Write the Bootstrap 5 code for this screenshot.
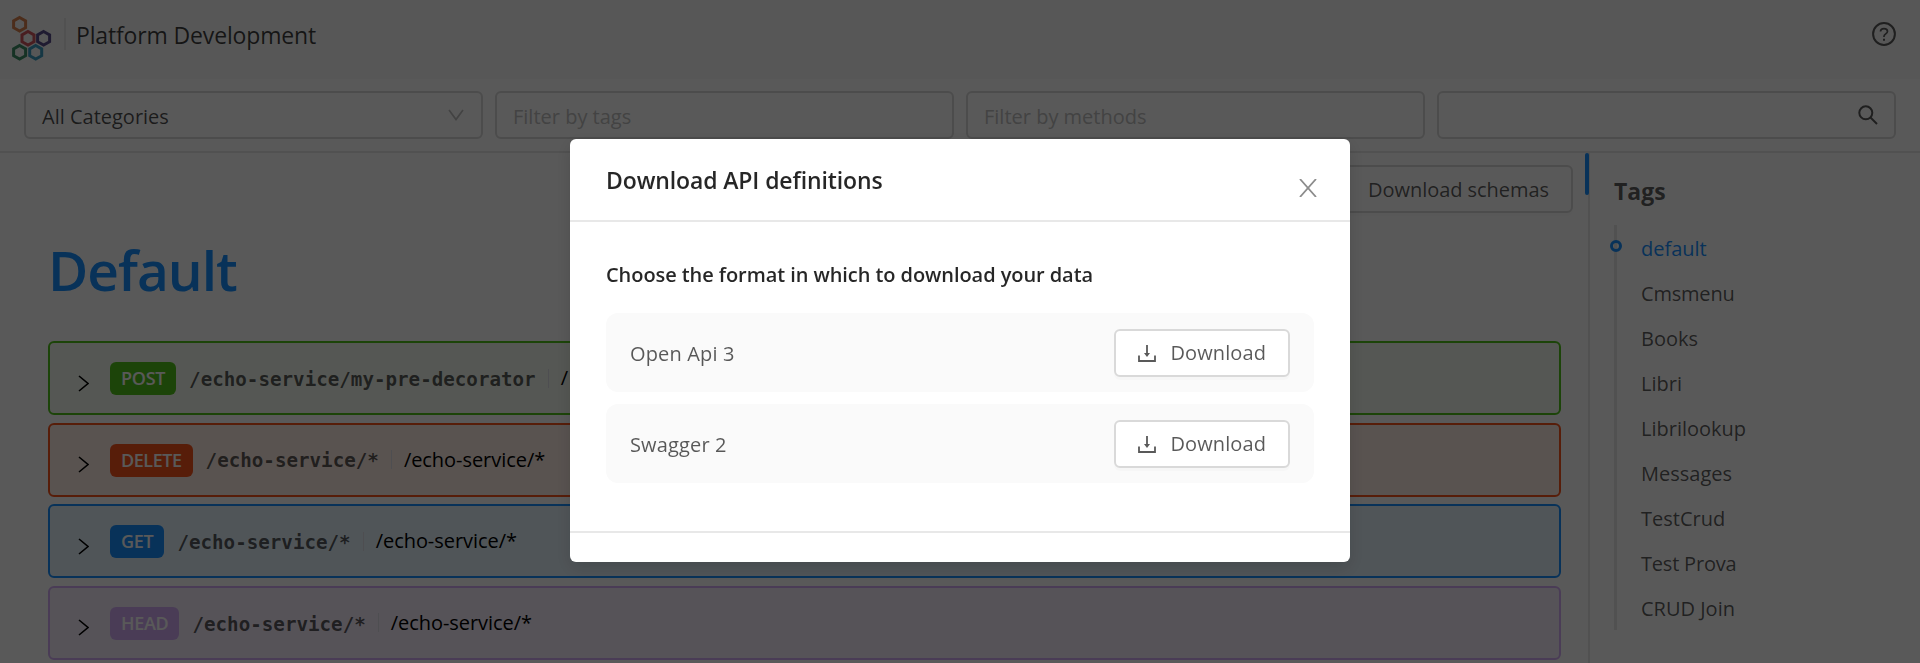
<!DOCTYPE html>
<html lang="en">
<head>
<meta charset="utf-8">
<meta name="viewport" content="width=device-width, initial-scale=1">
<title>Platform Development</title>
<link href="https://cdn.jsdelivr.net/npm/bootstrap@5.3.0/dist/css/bootstrap.min.css" rel="stylesheet">
<style>
  body { font-family: "Open Sans", "Noto Sans", sans-serif; font-size: 20px; line-height: 31.5px; color: rgba(0,0,0,.65); height: 663px; overflow: hidden; }
  svg { display: block; flex: none; }
  .page { height: 663px; }
  .topbar { height: 79px; background: #fafafa; padding: 0 24px 0 12px; }
  .logo { margin-top: 15px; }
  .brand-sep { width: 2px; height: 32px; background: #e8e8e8; margin: 18px 10px 0 12px; }
  .brand-name { font-size: 23px; line-height: 36px; color: rgba(0,0,0,.75); margin-top: 17px; letter-spacing: -.15px; }
  .help { margin-top: 22px; }
  .filters { height: 74px; border-bottom: 2px solid #e8e8e8; padding: 12px 24px 0; gap: 12px; }
  .field { flex: 1 1 0; height: 48px; border: 2px solid #d9d9d9; border-radius: 6px; padding: 0 16px; background: #fff; }
  .field span { padding-top: 4px; }
  .arrow { margin-right: 1px; }
  .hint { color: #bfbfbf; }
  .dark { color: rgba(0,0,0,.7); }
  .content { width: 1588px; height: 510px; padding: 12px 15px 0 48px; }
  .btn-plain { height: 48px; border: 2px solid #d9d9d9; border-radius: 6px; background: #fff; color: rgba(0,0,0,.65); font-size: 20px; line-height: 30px; padding: 1px 22px 0; gap: 14px; box-shadow: 0 3px 0 rgba(0,0,0,.016); letter-spacing: .1px; }
  .btn-plain svg { margin-top: -1px; }
  .schemas { letter-spacing: -.05px; }
  .group-title { font-size: 55px; line-height: 74px; font-weight: 600; color: #1890ff; margin: 20px 0 0 0; letter-spacing: -1px; }
  .routes { margin: 34px 12px 0 0; display: grid; gap: 7.6px; }
  .route { height: 74px; border: 2px solid; border-radius: 6px; padding: 0 28px; }
  .r-post { border-color: #52c41a; background: #f4faf0; --tone: #52c41a; }
  .r-delete { border-color: #fa541c; background: #feeee6; --tone: #fa541c; }
  .r-get { border-color: #1890ff; background: #e6f4fd; --tone: #1890ff; }
  .r-head { border-color: #d3adf7; background: #f6eefc; --tone: #d3adf7; }
  .route svg { margin-top: 10px; }
  .verb { background: var(--tone); color: #fff; border-radius: 6px; font-size: 18px; line-height: 33px; font-weight: 600; padding: 0 11px; margin: 1px 13px 0 21px; letter-spacing: -.3px; }
  .r-delete .verb { letter-spacing: -.45px; }
  .path { font-family: "DejaVu Sans Mono", monospace; font-weight: 700; font-size: 19.2px; color: rgba(0,0,0,.65); margin-top: 3px; }
  .bar { width: 1px; height: 19px; background: #e0e0e8; margin: 0 12px; }
  .desc { color: #000; letter-spacing: -.05px; }
  .side { height: 510px; border-left: 2px solid #e8e8e8; padding: 20px 0 0 24px; }
  .side-mark { position: absolute; left: -5px; top: 0; width: 4px; height: 42px; background: #1890ff; border-radius: 2px; }
  .side-title { font-size: 23px; line-height: 36px; font-weight: 700; color: rgba(0,0,0,.65); margin: 0; }
  .tag-list { border-left: 3px solid #e8e8e8; margin-top: 16px; height: 405px; padding: 8px 0 0 24px; }
  .tag-list li { height: 45px; line-height: 32px; }
  .tag-list .current { color: #1890ff; }
  .tag-list .tight { letter-spacing: -.2px; }
  .tag-dot { position: absolute; left: -7px; top: 15px; width: 12px; height: 12px; border: 3px solid #1890ff; border-radius: 50%; }
  .modal-backdrop.show { opacity: .65; }
  .modal-dialog { width: 780px; max-width: 780px; margin: 139px auto 0; }
  .modal-content { border: 0; border-radius: 6px; height: 423px; box-shadow: 0 6px 18px rgba(0,0,0,.15); color: rgba(0,0,0,.65); letter-spacing: .15px; }
  .modal-header { height: 83px; border-bottom: 2px solid #e8e8e8; padding: 2px 33px 0 36px; }
  .modal-title { font-size: 23px; line-height: 33px; font-weight: 600; color: rgba(0,0,0,.85); letter-spacing: -.12px; }
  .close-x { margin-top: 14px; }
  .modal-body { padding: 37px 36px 0; }
  .modal-foot { height: 31px; border-top: 2px solid #e8e8e8; }
  .choose { font-weight: 600; color: rgba(0,0,0,.85); letter-spacing: -.07px; }
  .formats { gap: 12px; margin-top: 22.5px; }
  .format { height: 79px; background: #fafafa; border-radius: 12px; padding: 0 24px; }
  .format > span { padding-top: 3px; }
</style>
</head>
<body class="bg-white">
<div class="page d-flex flex-column">
  <header class="topbar d-flex align-items-start">
    <svg class="logo" width="40" height="46" viewBox="0 0 40 46" fill="none" stroke-width="3">
      <path stroke="#d9824e" d="M7.600 2.500 13.600 5.900V12.700L7.600 16.100 1.600 12.700V5.900Z"/>
      <path stroke="#d2575f" d="M16 16.500 22 19.900V26.700L16 30.100 10 26.700V19.900Z"/>
      <path stroke="#5b4e8e" d="M31.600 16.500 37.600 19.900V26.700L31.600 30.100 25.600 26.700V19.900Z"/>
      <path stroke="#3f9069" d="M7.600 30.500 13.600 33.900V40.700L7.600 44.100 1.600 40.700V33.900Z"/>
      <path stroke="#3f9fc4" d="M23.700 30.500 29.700 33.900V40.700L23.700 44.100 17.700 40.700V33.900Z"/>
    </svg>
    <div class="brand-sep"></div>
    <div class="brand-name">Platform Development</div>
    <svg class="help ms-auto" width="24" height="24" viewBox="0 0 24 24" fill="none" stroke="#595959" stroke-width="2">
      <circle cx="12" cy="12" r="10.900"/>
      <path d="M8.500 9.600C8.500 7.600 10 6.600 12 6.600S15.500 7.800 15.500 9.500C15.500 11.800 12 12 12 14.200V15" stroke-width="1.700"/>
      <path d="M12 16.800V18.800"/>
    </svg>
  </header>
  <section class="filters d-flex">
    <div class="field d-flex align-items-center justify-content-between dark"><span>All Categories</span>
      <svg class="arrow" width="16" height="12" viewBox="0 0 16 12" fill="none" stroke="#bfbfbf" stroke-width="1.700"><path d="M1 1 8 10.500 15 1"/></svg></div>
    <div class="field d-flex align-items-center hint"><span>Filter by tags</span></div>
    <div class="field d-flex align-items-center hint"><span>Filter by methods</span></div>
    <div class="field d-flex align-items-center justify-content-end">
      <svg width="20" height="20" viewBox="0 0 20 20" fill="none" stroke="#595959" stroke-width="2"><circle cx="7.800" cy="7.800" r="6.500"/><path d="M12.500 12.500 19 19"/></svg></div>
  </section>
  <div class="d-flex">
    <main class="content d-flex flex-column">
      <div class="d-flex justify-content-end"><button class="btn-plain schemas">Download schemas</button></div>
      <h1 class="group-title">Default</h1>
      <div class="routes">
        <div class="route r-post d-flex align-items-center"><svg width="11" height="17" viewBox="0 0 11 17" fill="none" stroke="#000" stroke-width="1.600"><path d="M1 1 10 8.500 1 16"/></svg><span class="verb">POST</span><span class="path">/echo-service/my-pre-decorator</span><i class="bar"></i><span class="desc">/</span></div>
        <div class="route r-delete d-flex align-items-center"><svg width="11" height="17" viewBox="0 0 11 17" fill="none" stroke="#000" stroke-width="1.600"><path d="M1 1 10 8.500 1 16"/></svg><span class="verb">DELETE</span><span class="path">/echo-service/*</span><i class="bar"></i><span class="desc">/echo-service/*</span></div>
        <div class="route r-get d-flex align-items-center"><svg width="11" height="17" viewBox="0 0 11 17" fill="none" stroke="#000" stroke-width="1.600"><path d="M1 1 10 8.500 1 16"/></svg><span class="verb">GET</span><span class="path">/echo-service/*</span><i class="bar"></i><span class="desc">/echo-service/*</span></div>
        <div class="route r-head d-flex align-items-center"><svg width="11" height="17" viewBox="0 0 11 17" fill="none" stroke="#000" stroke-width="1.600"><path d="M1 1 10 8.500 1 16"/></svg><span class="verb">HEAD</span><span class="path">/echo-service/*</span><i class="bar"></i><span class="desc">/echo-service/*</span></div>
      </div>
    </main>
    <aside class="side position-relative flex-grow-1">
      <span class="side-mark"></span>
      <h2 class="side-title">Tags</h2>
      <ul class="tag-list list-unstyled position-relative mb-0">
        <li class="current"><span class="tag-dot"></span>default</li>
        <li class="tight">Cmsmenu</li>
        <li>Books</li>
        <li>Libri</li>
        <li>Librilookup</li>
        <li>Messages</li>
        <li>TestCrud</li>
        <li class="tight">Test Prova</li>
        <li>CRUD Join</li>
      </ul>
    </aside>
  </div>
</div>
<div class="modal-backdrop show"></div>
<div class="modal d-block" tabindex="-1" role="dialog">
  <div class="modal-dialog">
    <div class="modal-content">
      <div class="modal-header d-flex justify-content-between">
        <h2 class="modal-title">Download API definitions</h2>
        <svg class="close-x" width="18" height="18" viewBox="0 0 18 18" fill="none" stroke="#8c8c8c" stroke-width="1.800"><path d="M1 0 17 18M17 0 1 18"/></svg>
      </div>
      <div class="modal-body">
        <div class="choose">Choose the format in which to download your data</div>
        <div class="formats d-grid">
          <div class="format d-flex align-items-center justify-content-between"><span>Open Api 3</span>
            <button class="btn-plain d-flex align-items-center"><svg width="18" height="18" viewBox="0 0 18 18" fill="none" stroke="#595959" stroke-width="1.800"><path d="M1 11.500V17H17V11.500M9 1V10"/><path d="M6 9H12L9 13Z" fill="#595959" stroke="none"/></svg><span>Download</span></button></div>
          <div class="format d-flex align-items-center justify-content-between"><span>Swagger 2</span>
            <button class="btn-plain d-flex align-items-center"><svg width="18" height="18" viewBox="0 0 18 18" fill="none" stroke="#595959" stroke-width="1.800"><path d="M1 11.500V17H17V11.500M9 1V10"/><path d="M6 9H12L9 13Z" fill="#595959" stroke="none"/></svg><span>Download</span></button></div>
        </div>
      </div>
      <div class="modal-foot"></div>
    </div>
  </div>
</div>
<script src="https://cdn.jsdelivr.net/npm/bootstrap@5.3.0/dist/js/bootstrap.bundle.min.js"></script>
</body>
</html>
